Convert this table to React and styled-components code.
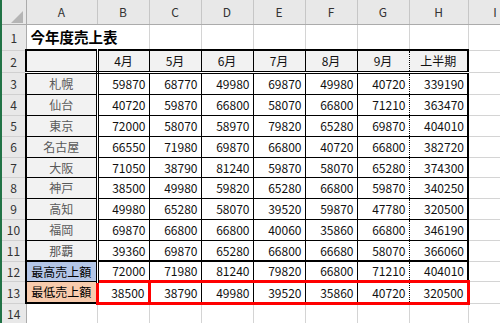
import React from 'react'
import styled, { createGlobalStyle } from 'styled-components'

const GRID = '1px solid #d4d4d4'
const THIN = '1px solid #000'
const THICK = '2px solid #000'
const DOUBLE = '3px double #000'
const DOT = '1px dotted #000'
const RED = '3px solid #ff0000'

const GlobalStyle = createGlobalStyle`
  html, body {
    margin: 0;
    background: #fff;
    overflow: hidden;
  }
  body {
    font-family: "Noto Sans CJK JP", "Liberation Sans", sans-serif;
  }
`

const Sheet = styled.div`
  width: 500px;
  height: 323px;
  overflow: hidden;
  border-left: 2px solid #217346;
  box-sizing: border-box;
`

const Grid = styled.table`
  border-collapse: collapse;
  table-layout: fixed;
  width: 520px;
`

const Row = styled.tr`
  height: ${p => p.$h}px;
`

const ColHead = styled.th`
  padding: 0;
  background: #e8e8e8;
  color: #333;
  font-size: 12px;
  font-weight: normal;
  text-align: center;
  border-right: 1px solid #c6c6c6;
  border-bottom: 1px solid #ababab;
`

const Corner = styled(ColHead)`
  vertical-align: bottom;
  border-right: 1px solid #ababab;

  svg {
    display: block;
    margin: 0 3px 1px auto;
  }
`

const RowHead = styled.th`
  padding: 0;
  background: #e8e8e8;
  color: #333;
  font-size: 12px;
  font-weight: normal;
  text-align: center;
  border-right: 1px solid #ababab;
  border-bottom: 1px solid #d0d0d0;
`

const Cell = styled.td`
  padding: 0 3px;
  border-top: ${p => p.$bt || GRID};
  border-right: ${p => p.$br || GRID};
  border-bottom: ${p => p.$bb || GRID};
  border-left: ${p => p.$bl || GRID};
  background: ${p => p.$fill || 'transparent'};
  color: ${p => p.$ink || '#111'};
  text-align: ${p => p.$align || 'left'};
  font-size: 12px;
  white-space: nowrap;
  overflow: hidden;
`

const Title = styled(Cell)`
  padding-left: 4px;
  font-size: 14.5px;
  font-weight: bold;
  color: #000;
`

const months = ['4月', '5月', '6月', '7月', '8月', '9月', '上半期']
const letters = ['A', 'B', 'C', 'D', 'E', 'F', 'G', 'H', 'I']

const cities = [
  ['札幌', 59870, 68770, 49980, 69870, 49980, 40720, 339190],
  ['仙台', 40720, 59870, 66800, 58070, 66800, 71210, 363470],
  ['東京', 72000, 58070, 58970, 79820, 65280, 69870, 404010],
  ['名古屋', 66550, 71980, 69870, 66800, 40720, 66800, 382720],
  ['大阪', 71050, 38790, 81240, 59870, 58070, 65280, 374300],
  ['神戸', 38500, 49980, 59820, 65280, 66800, 59870, 340250],
  ['高知', 49980, 65280, 58070, 39520, 59870, 47780, 320500],
  ['福岡', 69870, 66800, 66800, 40060, 35860, 66800, 346190],
  ['那覇', 39360, 69870, 65280, 66800, 66680, 58070, 366060],
]

const summary = [
  ['最高売上額', '#b4c6e7', 72000, 71980, 81240, 79820, 66800, 71210, 404010],
  ['最低売上額', '#f8cbad', 38500, 38790, 49980, 39520, 35860, 40720, 320500],
]

// row heights: header, 1..14
const heights = [24, 26, 22, 22, 21, 21, 21, 20, 21, 21, 21, 21, 20, 22, 21]

// borders of the table block A2:H13, r = sheet row, c = 0 for A .. 7 for H
const edges = (r, c) => {
  const b = {
    $bt: r === 2 || r === 12 ? THICK : r === 3 ? DOUBLE : THIN,
    $bb: r === 13 || r === 11 ? THICK : r === 2 ? DOUBLE : THIN,
    $bl: c === 0 ? THICK : c === 1 ? DOUBLE : c === 7 ? DOT : THIN,
    $br: c === 7 ? THICK : c === 0 ? DOUBLE : c === 6 ? DOT : THIN,
  }
  if (r === 13) {
    if (c === 0) b.$br = RED
    if (c >= 1) {
      b.$bt = RED
      b.$bb = RED
    }
    if (c === 1) {
      b.$bl = RED
      b.$br = RED
    }
    if (c === 2) b.$bl = RED
    if (c === 7) b.$br = RED
  }
  return b
}

const Corner3 = () => (
  <svg width="12" height="12" viewBox="0 0 12 12">
    <polygon points="12,0 12,12 0,12" fill="#b5b5b5" />
  </svg>
)

export default function App() {
  return (
    <Sheet>
      <GlobalStyle />
      <Grid>
        <colgroup>
          <col style={{ width: 24 }} />
          <col style={{ width: 71 }} />
          <col style={{ width: 52 }} />
          <col style={{ width: 52 }} />
          <col style={{ width: 52 }} />
          <col style={{ width: 52 }} />
          <col style={{ width: 52 }} />
          <col style={{ width: 52 }} />
          <col style={{ width: 59 }} />
          <col style={{ width: 54 }} />
        </colgroup>
        <tbody>
          <Row $h={heights[0]}>
            <Corner><Corner3 /></Corner>
            {letters.map(l => <ColHead key={l}>{l}</ColHead>)}
          </Row>

          <Row $h={heights[1]}>
            <RowHead>1</RowHead>
            <Title colSpan={2} $bb={THICK}>今年度売上表</Title>
            {[2, 3, 4, 5, 6, 7].map(c => <Cell key={c} $bb={THICK} />)}
            <Cell />
          </Row>

          <Row $h={heights[2]}>
            <RowHead>2</RowHead>
            <Cell {...edges(2, 0)} $fill="#f2f2f2" />
            {months.map((m, i) => (
              <Cell key={m} {...edges(2, i + 1)} $fill="#f2f2f2" $align="center">{m}</Cell>
            ))}
            <Cell />
          </Row>

          {cities.map(([name, ...vals], i) => {
            const r = i + 3
            return (
              <Row key={name} $h={heights[r]}>
                <RowHead>{r}</RowHead>
                <Cell {...edges(r, 0)} $fill="#f2f2f2" $ink="#595959" $align="center">{name}</Cell>
                {vals.map((v, c) => (
                  <Cell key={c} {...edges(r, c + 1)} $align="right">{v}</Cell>
                ))}
                <Cell />
              </Row>
            )
          })}

          {summary.map(([label, fill, ...vals], i) => {
            const r = i + 12
            return (
              <Row key={label} $h={heights[r]}>
                <RowHead>{r}</RowHead>
                <Cell {...edges(r, 0)} $fill={fill} $ink="#000" $align="center">{label}</Cell>
                {vals.map((v, c) => (
                  <Cell key={c} {...edges(r, c + 1)} $align="right">{v}</Cell>
                ))}
                <Cell />
              </Row>
            )
          })}

          <Row $h={heights[14]}>
            <RowHead>14</RowHead>
            {letters.map(l => <Cell key={l} />)}
          </Row>
        </tbody>
      </Grid>
    </Sheet>
  )
}
